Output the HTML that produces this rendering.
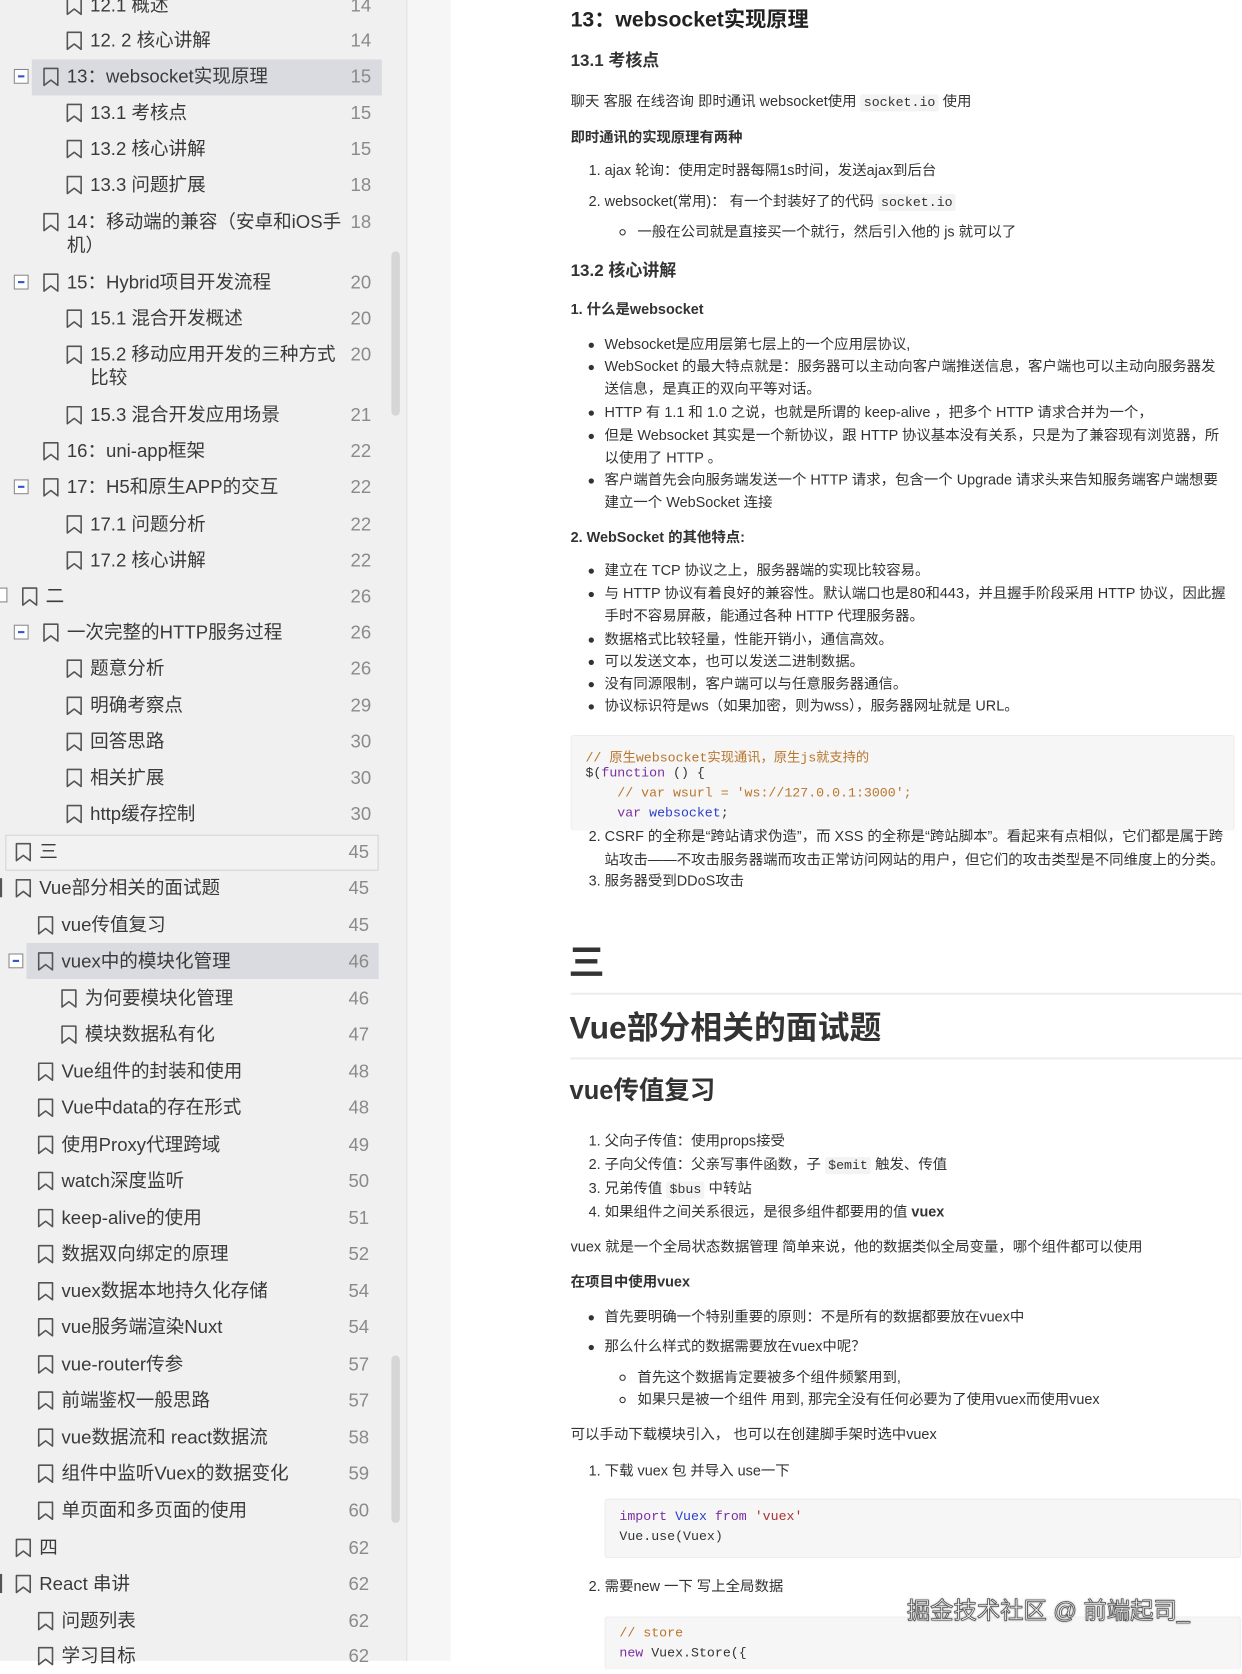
<!DOCTYPE html>
<html><head><meta charset="utf-8"><style>
*{margin:0;padding:0;box-sizing:border-box}
html,body{width:1242px;height:1660px;overflow:hidden;background:#fff}
#w{position:absolute;left:0;top:0;width:1171px;height:1566px;transform:scale(1.0606);transform-origin:0 0;font-family:"Liberation Sans","Noto Sans CJK SC",sans-serif;color:#333}
#side{position:absolute;left:0;top:0;width:383px;height:1566px;background:#f0f0f0}
#gap{position:absolute;left:383px;top:0;width:42px;height:1566px;background:#f6f6f6;border-left:1px solid #dcdcdc}
.r{position:absolute;height:34px;font-size:17.5px;line-height:24px;color:#3a3a3a;white-space:nowrap}
.r .t{position:absolute;top:5px;line-height:24px}
.r .n{position:absolute;top:5px;line-height:24px;color:#8a8a8a}
.bm{position:absolute;top:8px;width:16px;height:19px}
.ex{position:absolute;top:10px;width:14px;height:14px;border:1px solid #888;background:#fff}
.ex:after{content:"";position:absolute;left:3px;top:5px;width:6px;height:2px;background:#3355cc}
.sb{position:absolute;left:369px;width:8px;background:#d6d6d6;border-radius:4px}
#ct{position:absolute;left:3px;top:0;width:1171px;height:1566px}
.c{position:absolute;font-size:13.6px;color:#333;white-space:nowrap;line-height:18px}
.b{font-weight:bold}
.code{font-family:"Liberation Mono","Noto Sans CJK SC",monospace;font-size:12.5px;background:#f3f3f3;padding:1px 3px;border-radius:2px}
.blk{position:absolute;background:#f6f6f6;border:1px solid #ececec;border-radius:3px}
.ml{position:absolute;font-family:"Liberation Mono","Noto Sans CJK SC",monospace;font-size:12.5px;white-space:nowrap;color:#333}
.dot{position:absolute;width:5px;height:5px;border-radius:50%;background:#333}
.circ{position:absolute;width:6px;height:6px;border-radius:50%;border:1px solid #333}
.hr{position:absolute;left:535px;width:633px;height:2px;background:#eee}
</style></head><body><div id="w">
<div id="side"></div><div id="gap"></div>
<div class="sb" style="top:237px;height:155px"></div>
<div class="sb" style="top:1278px;height:158px"></div>
<div style="position:absolute;left:30px;top:56px;width:330px;height:34px;background:#d9dbe0"></div>
<div style="position:absolute;left:5px;top:787px;width:352px;height:34px;border:1px solid #d4d4d4;background:#f2f2f2"></div>
<div style="position:absolute;left:25px;top:889px;width:332px;height:34px;background:#d9dbe0"></div>
<div style="position:absolute;left:0;top:828px;width:2px;height:18px;background:#555"></div>
<div style="position:absolute;left:0;top:1484px;width:2px;height:18px;background:#555"></div>
<div style="position:absolute;left:0;top:554px;width:7px;height:14px;border:1px solid #888;border-left:none;background:#fff"></div>

<svg width="0" height="0" style="position:absolute"><defs><symbol id="bk" viewBox="0 0 16 19"><path d="M1.5 1.5H14.5V17.5L8 12.5L1.5 17.5Z" fill="none" stroke="#555" stroke-width="1.5" stroke-linejoin="round"/></symbol></defs></svg>

<div id="rows"></div>
<script>
var R=[
[5,62,"12.1 概述","14",null,350],
[38,62,"12. 2 核心讲解","14",null,350],
[72,40,"13：websocket实现原理","15",13,350],
[106,62,"13.1 考核点","15",null,350],
[140,62,"13.2 核心讲解","15",null,350],
[174,62,"13.3 问题扩展","18",null,350],
[209,40,"14：移动端的兼容（安卓和iOS手","18",null,350],
[231,40,"机）","",null,350,1],
[266,40,"15：Hybrid项目开发流程","20",13,350],
[300,62,"15.1 混合开发概述","20",null,350],
[334,62,"15.2 移动应用开发的三种方式","20",null,350],
[356,62,"比较","",null,350,1],
[391,62,"15.3 混合开发应用场景","21",null,350],
[425,40,"16：uni-app框架","22",null,350],
[459,40,"17：H5和原生APP的交互","22",13,350],
[494,62,"17.1 问题分析","22",null,350],
[528,62,"17.2 核心讲解","22",null,350],
[562,20,"二","26",null,350],
[596,40,"一次完整的HTTP服务过程","26",13,350],
[630,62,"题意分析","26",null,350],
[665,62,"明确考察点","29",null,350],
[699,62,"回答思路","30",null,350],
[733,62,"相关扩展","30",null,350],
[767,62,"http缓存控制","30",null,350],
[803,14,"三","45",null,348],
[837,14,"Vue部分相关的面试题","45",null,348],
[872,35,"vue传值复习","45",null,348],
[906,35,"vuex中的模块化管理","46",8,348],
[941,57,"为何要模块化管理","46",null,348],
[975,57,"模块数据私有化","47",null,348],
[1010,35,"Vue组件的封装和使用","48",null,348],
[1044,35,"Vue中data的存在形式","48",null,348],
[1079,35,"使用Proxy代理跨域","49",null,348],
[1113,35,"watch深度监听","50",null,348],
[1148,35,"keep-alive的使用","51",null,348],
[1182,35,"数据双向绑定的原理","52",null,348],
[1217,35,"vuex数据本地持久化存储","54",null,348],
[1251,35,"vue服务端渲染Nuxt","54",null,348],
[1286,35,"vue-router传参","57",null,348],
[1320,35,"前端鉴权一般思路","57",null,348],
[1355,35,"vue数据流和 react数据流","58",null,348],
[1389,35,"组件中监听Vuex的数据变化","59",null,348],
[1424,35,"单页面和多页面的使用","60",null,348],
[1459,14,"四","62",null,348],
[1493,14,"React 串讲","62",null,348],
[1528,35,"问题列表","62",null,348],
[1561,35,"学习目标","62",null,348]
];
var h="";
R.forEach(function(a){
 var y=a[0]-17;
 h+='<div class="r" style="left:0;top:'+y+'px;width:360px">';
 if(!a[6]) h+='<svg class="bm" style="left:'+a[1]+'px"><use href="#bk"/></svg>';
 h+='<span class="t" style="left:'+(a[1]+23)+'px">'+a[2]+'</span>';
 if(a[3]) h+='<span class="n" style="right:'+(360-a[5])+'px">'+a[3]+'</span>';
 if(a[4]!==null&&a[4]!==undefined) h+='<span class="ex" style="left:'+a[4]+'px"></span>';
 h+='</div>';
});
document.getElementById("rows").innerHTML=h;
</script>

<div id="ct">
<div class="c b" style="left:535px;top:6px;font-size:20px;line-height:26px;color:#222">13：websocket实现原理</div>
<div class="c b" style="left:535px;top:48px;font-size:16px;line-height:20px">13.1 考核点</div>
<div class="c" style="left:535px;top:87px">聊天 客服 在线咨询 即时通讯 websocket使用 <span class="code">socket.io</span> 使用</div>
<div class="c b" style="left:535px;top:121px;font-size:13.5px">即时通讯的实现原理有两种</div>
<div class="c" style="left:552px;top:152px">1. ajax 轮询：使用定时器每隔1s时间，发送ajax到后台</div>
<div class="c" style="left:552px;top:181px">2. websocket(常用)：  有一个封装好了的代码 <span class="code">socket.io</span></div>
<div class="circ" style="left:581px;top:216px"></div>
<div class="c" style="left:598px;top:210px">一般在公司就是直接买一个就行，然后引入他的 js 就可以了</div>
<div class="c b" style="left:535px;top:246px;font-size:16px;line-height:20px">13.2 核心讲解</div>
<div class="c b" style="left:535px;top:283px">1. 什么是websocket</div>
<div class="dot" style="left:552px;top:323px"></div><div class="c" style="left:567px;top:316px">Websocket是应用层第七层上的一个应用层协议,</div>
<div class="dot" style="left:552px;top:344px"></div><div class="c" style="left:567px;top:337px">WebSocket 的最大特点就是：服务器可以主动向客户端推送信息，客户端也可以主动向服务器发</div>
<div class="c" style="left:567px;top:358px">送信息，是真正的双向平等对话。</div>
<div class="dot" style="left:552px;top:387px"></div><div class="c" style="left:567px;top:380px">HTTP 有 1.1 和 1.0 之说，也就是所谓的 keep-alive ，把多个 HTTP 请求合并为一个，</div>
<div class="dot" style="left:552px;top:409px"></div><div class="c" style="left:567px;top:402px">但是 Websocket 其实是一个新协议，跟 HTTP 协议基本没有关系，只是为了兼容现有浏览器，所</div>
<div class="c" style="left:567px;top:423px">以使用了 HTTP 。</div>
<div class="dot" style="left:552px;top:451px"></div><div class="c" style="left:567px;top:444px">客户端首先会向服务端发送一个 HTTP 请求，包含一个 Upgrade 请求头来告知服务端客户端想要</div>
<div class="c" style="left:567px;top:465px">建立一个 WebSocket 连接</div>
<div class="c b" style="left:535px;top:498px">2. WebSocket 的其他特点:</div>
<div class="dot" style="left:552px;top:536px"></div><div class="c" style="left:567px;top:529px">建立在 TCP 协议之上，服务器端的实现比较容易。</div>
<div class="dot" style="left:552px;top:558px"></div><div class="c" style="left:567px;top:551px">与 HTTP 协议有着良好的兼容性。默认端口也是80和443，并且握手阶段采用 HTTP 协议，因此握</div>
<div class="c" style="left:567px;top:572px">手时不容易屏蔽，能通过各种 HTTP 代理服务器。</div>
<div class="dot" style="left:552px;top:601px"></div><div class="c" style="left:567px;top:594px">数据格式比较轻量，性能开销小，通信高效。</div>
<div class="dot" style="left:552px;top:622px"></div><div class="c" style="left:567px;top:615px">可以发送文本，也可以发送二进制数据。</div>
<div class="dot" style="left:552px;top:643px"></div><div class="c" style="left:567px;top:636px">没有同源限制，客户端可以与任意服务器通信。</div>
<div class="dot" style="left:552px;top:664px"></div><div class="c" style="left:567px;top:657px">协议标识符是ws（如果加密，则为wss），服务器网址就是 URL。</div>
<div class="blk" style="left:535px;top:693px;width:626px;height:90px;border-bottom:none"></div>
<div class="ml" style="left:549px;top:703px;color:#b8762e">// 原生websocket实现通讯，原生js就支持的</div>
<div class="ml" style="left:549px;top:722px">$(<span style="color:#7a2fa0">function</span> () {</div>
<div class="ml" style="left:579px;top:741px;color:#b8762e">// var wsurl = 'ws://127.0.0.1:3000';</div>
<div class="ml" style="left:579px;top:760px"><span style="color:#7a2fa0">var</span> <span style="color:#2a3fcc">websocket</span>;</div>
<div class="c" style="left:552px;top:780px">2. CSRF 的全称是“跨站请求伪造”，而 XSS 的全称是“跨站脚本”。看起来有点相似，它们都是属于跨</div>
<div class="c" style="left:567px;top:802px">站攻击——不攻击服务器端而攻击正常访问网站的用户，但它们的攻击类型是不同维度上的分类。</div>
<div class="c" style="left:552px;top:822px">3. 服务器受到DDoS攻击</div>
<div class="c b" style="left:533px;top:888px;font-size:34px;line-height:40px;color:#333">三</div>
<div class="hr" style="top:936px"></div>
<div class="c b" style="left:534px;top:951px;font-size:30px;line-height:38px;color:#333">Vue部分相关的面试题</div>
<div class="hr" style="top:997px"></div>
<div class="c b" style="left:534px;top:1013px;font-size:24px;line-height:32px;color:#333">vue传值复习</div>
<div class="c" style="left:552px;top:1067px">1. 父向子传值：使用props接受</div>
<div class="c" style="left:552px;top:1089px">2. 子向父传值：父亲写事件函数，子 <span class="code">$emit</span> 触发、传值</div>
<div class="c" style="left:552px;top:1112px">3. 兄弟传值 <span class="code">$bus</span> 中转站</div>
<div class="c" style="left:552px;top:1134px">4. 如果组件之间关系很远，是很多组件都要用的值 <b>vuex</b></div>
<div class="c" style="left:535px;top:1167px">vuex 就是一个全局状态数据管理 简单来说，他的数据类似全局变量，哪个组件都可以使用</div>
<div class="c b" style="left:535px;top:1200px">在项目中使用vuex</div>
<div class="dot" style="left:552px;top:1240px"></div><div class="c" style="left:567px;top:1233px">首先要明确一个特别重要的原则：不是所有的数据都要放在vuex中</div>
<div class="dot" style="left:552px;top:1268px"></div><div class="c" style="left:567px;top:1261px">那么什么样式的数据需要放在vuex中呢？</div>
<div class="circ" style="left:581px;top:1296px"></div><div class="c" style="left:598px;top:1290px">首先这个数据肯定要被多个组件频繁用到,</div>
<div class="circ" style="left:581px;top:1317px"></div><div class="c" style="left:598px;top:1311px">如果只是被一个组件 用到, 那完全没有任何必要为了使用vuex而使用vuex</div>
<div class="c" style="left:535px;top:1344px">可以手动下载模块引入， 也可以在创建脚手架时选中vuex</div>
<div class="c" style="left:552px;top:1378px">1. 下载 vuex 包 并导入 use一下</div>
<div class="blk" style="left:567px;top:1413px;width:600px;height:56px"></div>
<div class="ml" style="left:581px;top:1423px"><span style="color:#7a2fa0">import</span> <span style="color:#2a3fcc">Vuex</span> <span style="color:#7a2fa0">from</span> <span style="color:#a33">'vuex'</span></div>
<div class="ml" style="left:581px;top:1442px">Vue.use(Vuex)</div>
<div class="c" style="left:552px;top:1487px">2. 需要new 一下 写上全局数据</div>
<div class="blk" style="left:567px;top:1524px;width:600px;height:50px;border-bottom:none"></div>
<div class="ml" style="left:581px;top:1533px;color:#b8762e">// store</div>
<div class="ml" style="left:581px;top:1552px"><span style="color:#7a2fa0">new</span> Vuex.Store({</div>
<div class="c" style="left:852px;top:1505px;font-size:22px;line-height:28px;color:#fff;-webkit-text-stroke:0.8px #555;text-shadow:0 0 2px #666">掘金技术社区 @ 前端起司_</div>
</div>
</div></body></html>
